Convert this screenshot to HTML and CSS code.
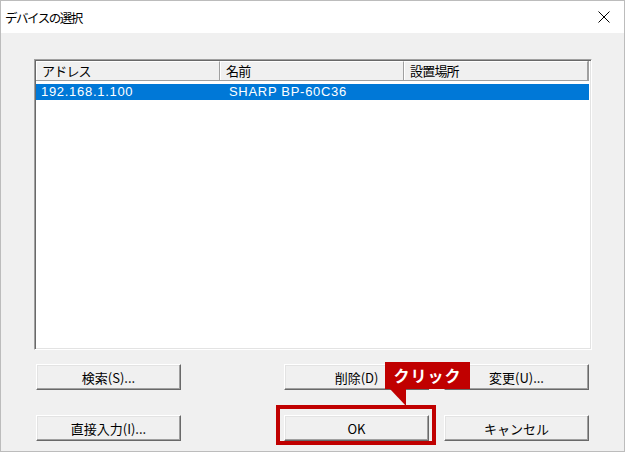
FILE: index.html
```html
<!DOCTYPE html>
<html lang="ja">
<head>
    <meta charset="UTF-8">
    <title>デバイスの選択</title>
    <link rel="stylesheet" href="styles.css">
</head>
<body>

    <div class="window">
        <div class="titlebar">
            <span class="title">デバイスの選択</span>
            <svg class="close" width="12" height="12" viewBox="0 0 12 12">
                <path d="M0.5 0.5 L11.5 11.5 M11.5 0.5 L0.5 11.5" stroke="#000" stroke-width="1" fill="none"/>
            </svg>
        </div>

        <div class="content">
            <div class="listbox">
                <div class="list-header">
                    <div class="col col-addr">アドレス</div>
                    <div class="col col-name">名前</div>
                    <div class="col col-place">設置場所</div>
                </div>
                <div class="list-row selected">
                    <div class="cell col-addr">192.168.1.100</div>
                    <div class="cell col-name">SHARP BP-60C36</div>
                    <div class="cell col-place"></div>
                </div>
            </div>

            <div class="button-row first">
                <button class="btn">検索(S)...</button>
                <div class="btn-group">
                    <button class="btn">削除(D)</button>
                    <button class="btn">変更(U)...</button>
                </div>
            </div>

            <div class="button-row">
                <button class="btn">直接入力(I)...</button>
                <div class="btn-group">
                    <button class="btn">OK</button>
                    <button class="btn">キャンセル</button>
                </div>
            </div>
        </div>

        <!-- annotation overlay -->
        <div class="highlight"></div>
        <div class="callout">クリック</div>
    </div>

</body>
</html>
```

FILE: styles.css
```css
body {
    margin: 0;
    font-family: "Noto Sans CJK JP", "Liberation Sans", sans-serif;
    background-color: #fff;
}

.window {
    position: relative;
    width: 623px;
    height: 450px;
    border: 1px solid #bcbcbc;
    background-color: #f0f0f0;
    overflow: hidden;
}

.titlebar {
    height: 32px;
    background-color: #fff;
    display: flex;
    align-items: center;
    justify-content: space-between;
    padding: 0 14px 0 4px;
}

.title {
    font-size: 12.5px;
    letter-spacing: -1.5px;
    color: #000;
}

.content {
    padding: 26px 32px 0 33px;
}

.listbox {
    height: 287px;
    background-color: #fff;
    border-top: 1px solid #a0a0a0;
    border-left: 1px solid #a0a0a0;
    border-right: 1px solid #fff;
    border-bottom: 1px solid #fff;
    box-shadow: inset 1px 1px 0 #696969, inset -1px -1px 0 #e3e3e3;
    padding: 1px;
}

.list-header {
    display: flex;
    height: 19px;
    margin-right: 1px;
    border-bottom: 1px solid #a0a0a0;
    border-right: 1px solid #a0a0a0;
}

.col {
    box-sizing: border-box;
    height: 19px;
    line-height: 18px;
    font-size: 13px;
    letter-spacing: -0.8px;
    padding-left: 5px;
    background-color: #f0f0f0;
    border-left: 1px solid #fff;
    border-top: 1px solid #fff;
    border-right: 1px solid #a0a0a0;
    color: #000;
}

.col-addr {
    width: 184px;
}

.col-name {
    width: 184px;
}

.col-place {
    flex: 1;
}

.list-row {
    display: flex;
    height: 16px;
    margin-top: 3px;
    margin-right: 1px;
}

.cell {
    box-sizing: border-box;
    line-height: 16px;
    font-family: "Liberation Sans", sans-serif;
    font-size: 13px;
    padding-left: 5px;
    letter-spacing: 0.7px;
}

.cell.col-name {
    padding-left: 9px;
}

.selected {
    background-color: #0078d7;
    color: #fff;
}

.button-row {
    display: flex;
    align-items: center;
    padding: 0 3px 0 2px;
    margin-top: 25px;
}

.button-row.first {
    margin-top: 14px;
}

.btn-group {
    display: flex;
    gap: 15px;
    margin-left: auto;
}

.btn {
    width: 145px;
    height: 26px;
    padding: 0;
    font-family: "Noto Sans CJK JP", "Liberation Sans", sans-serif;
    font-size: 13px;
    color: #000;
    background-color: #f0f0f0;
    border-top: 1px solid #fff;
    border-left: 1px solid #fff;
    border-right: 1px solid #696969;
    border-bottom: 1px solid #696969;
    box-shadow: inset -1px -1px 0 #a0a0a0, inset 1px 1px 0 #e3e3e3;
    cursor: pointer;
}

/* annotation */
.highlight {
    position: absolute;
    left: 275px;
    top: 404px;
    width: 152px;
    height: 32px;
    border: 4px solid #c00000;
}

.callout {
    position: absolute;
    left: 384px;
    top: 361px;
    width: 85px;
    height: 27px;
    line-height: 27px;
    background-color: #c00000;
    color: #fff;
    font-size: 16px;
    font-weight: bold;
    text-align: center;
    letter-spacing: 1px;
}

.callout::after {
    content: "";
    position: absolute;
    left: 5px;
    top: 27px;
    width: 0;
    height: 0;
    border-top: 17px solid #c00000;
    border-left: 16px solid transparent;
}
```
